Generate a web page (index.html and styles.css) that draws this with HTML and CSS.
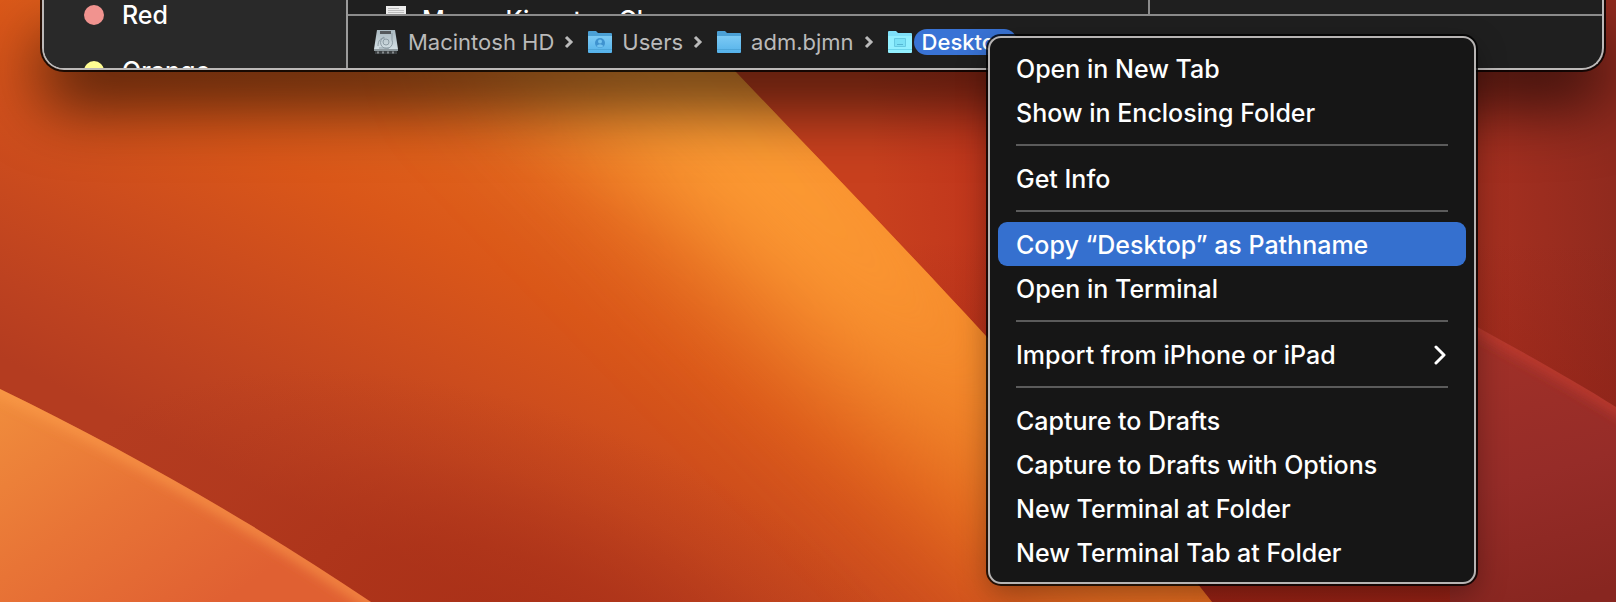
FILE: index.html
```html
<!DOCTYPE html>
<html lang="en">
<head>
<meta charset="utf-8">
<title>Desktop</title>
<link rel="stylesheet" href="styles.css">
</head>
<body>
<svg class="wallpaper" viewBox="0 0 1616 602" preserveAspectRatio="xMinYMin slice" aria-hidden="true">
  <defs>
    <linearGradient id="base" gradientUnits="userSpaceOnUse" x1="-144" y1="285" x2="76" y2="-151">
      <stop offset="0" stop-color="#b43c20"/>
      <stop offset=".15" stop-color="#bd4220"/>
      <stop offset=".4" stop-color="#cd4d1d"/>
      <stop offset=".62" stop-color="#da5719"/>
      <stop offset=".82" stop-color="#e0621c"/>
      <stop offset="1" stop-color="#e87522"/>
    </linearGradient>
    <linearGradient id="glow" gradientUnits="userSpaceOnUse" x1="760" y1="150" x2="1120" y2="590">
      <stop offset="0" stop-color="#fd9c34"/>
      <stop offset=".35" stop-color="#fb9632"/>
      <stop offset=".65" stop-color="#f58c2c" stop-opacity=".8"/>
      <stop offset="1" stop-color="#ee8228" stop-opacity=".5"/>
    </linearGradient>
    <radialGradient id="ember" gradientUnits="userSpaceOnUse" cx="0" cy="0" r="1" gradientTransform="translate(520 640) rotate(20) scale(480 230)">
      <stop offset="0" stop-color="#a82e16" stop-opacity=".85"/>
      <stop offset=".35" stop-color="#a82e16" stop-opacity=".62"/>
      <stop offset=".7" stop-color="#a82e16" stop-opacity=".2"/>
      <stop offset="1" stop-color="#a82e16" stop-opacity="0"/>
    </radialGradient>
    <linearGradient id="crimson" gradientUnits="userSpaceOnUse" x1="880" y1="260" x2="1616" y2="200">
      <stop offset="0" stop-color="#c8401e"/>
      <stop offset=".15" stop-color="#c0361c"/>
      <stop offset=".8" stop-color="#a83020"/>
      <stop offset="1" stop-color="#902a1e"/>
    </linearGradient>
    <linearGradient id="shade" x1="0" y1="0" x2="0" y2="1">
      <stop offset=".4" stop-color="#8c1a10" stop-opacity="0"/>
      <stop offset="1" stop-color="#8c1a10" stop-opacity=".7"/>
    </linearGradient>
    <linearGradient id="petal" gradientUnits="userSpaceOnUse" x1="0" y1="400" x2="170" y2="640">
      <stop offset="0" stop-color="#f08c3c"/>
      <stop offset=".5" stop-color="#e87436"/>
      <stop offset="1" stop-color="#e06032"/>
    </linearGradient>
    <linearGradient id="plum" gradientUnits="userSpaceOnUse" x1="1490" y1="350" x2="1560" y2="602">
      <stop offset="0" stop-color="#a03028"/>
      <stop offset=".5" stop-color="#962c28"/>
      <stop offset="1" stop-color="#882620"/>
    </linearGradient>
    <clipPath id="left"><path d="M0 0H669L734 70C818 158 905 248 985 335C1060 420 1140 510 1212 602H0Z"/></clipPath>
    <clipPath id="corner"><path d="M0 389C130 452 262 528 371 602H0Z"/></clipPath>
    <clipPath id="ridge"><path d="M1450 312C1510 345 1570 378 1616 407V602H1450Z"/></clipPath>
    <filter id="wide" x="-50%" y="-50%" width="200%" height="200%" color-interpolation-filters="sRGB"><feGaussianBlur stdDeviation="64"/></filter>
    <filter id="edge" x="-20%" y="-20%" width="140%" height="140%"><feGaussianBlur stdDeviation="7"/></filter>
  </defs>
  <rect width="1616" height="602" fill="url(#crimson)"/>
  <rect x="900" width="716" height="602" fill="url(#shade)"/>
  <g clip-path="url(#left)">
    <rect width="1240" height="602" fill="url(#base)"/>
    <path d="M560 -60L800 190L1010 410L1240 680" fill="none" stroke="url(#glow)" stroke-width="210" filter="url(#wide)"/>
    <rect width="1240" height="602" fill="url(#ember)"/>
  </g>
  <g clip-path="url(#corner)">
    <rect y="380" width="380" height="222" fill="url(#petal)"/>
    <path d="M-20 380C130 452 262 528 391 616" fill="none" stroke="#ffa04e" stroke-width="8" filter="url(#edge)"/>
  </g>
  <g clip-path="url(#ridge)">
    <rect x="1440" y="300" width="176" height="302" fill="url(#plum)"/>
    <path d="M1450 312C1510 345 1570 378 1640 422" fill="none" stroke="#d04030" stroke-width="8" filter="url(#edge)"/>
  </g>
</svg>

<main class="window">
  <aside class="sidebar">
    <ul class="tags">
      <li class="tag"><span class="dot dot-red"></span>Red</li>
      <li class="tag"><span class="dot dot-orange"></span>Orange</li>
    </ul>
  </aside>
  <section class="content">
    <div class="columns">
      <div class="file">
        <svg class="page" viewBox="0 0 20 26" aria-hidden="true"><path fill="#ececec" d="M0 0h20v26H0z"/><path stroke="#bdbdbd" d="M2 2.500h11M2 4.500h16M2 6.500h16"/></svg>
        <span>Moore Kingston Clean</span>
      </div>
      <div class="preview"></div>
    </div>
    <nav class="pathbar" aria-label="Path">
      <a class="crumb" href="#hd">
        <svg class="icon" viewBox="0 0 24 26" aria-hidden="true">
          <defs><linearGradient id="metal" x1="0" y1="0" x2="0" y2="1"><stop offset="0" stop-color="#aab9c0"/><stop offset="1" stop-color="#d3dfe4"/></linearGradient></defs>
          <path fill="url(#metal)" d="M3 1h18l3 19H0z"/>
          <path fill="#8f9a9f" d="M0 20h24v2H0z"/><path fill="#3c4042" d="M1 22h22v3H1z"/>
          <path stroke="#85898b" stroke-width="2" stroke-dasharray="2 3" d="M3 23.500h18"/>
          <path fill="#55595c" d="M6 2h11v3H6z"/>
          <path fill="none" stroke="#8d9ca4" d="M18 4v7a6 6 0 1 1-8-3M4 17c0-5 2-8 7-8M5 19h10"/>
          <circle cx="12" cy="13" r="3" fill="none" stroke="#8d9ca4"/>
        </svg>
        <span>Macintosh HD</span>
      </a>
      <svg class="sep" viewBox="0 0 8 12" aria-hidden="true"><path d="M1 1l5 5-5 5"/></svg>
      <a class="crumb" href="#users">
        <svg class="icon" viewBox="0 0 24 26" aria-hidden="true">
          <defs><linearGradient id="blue" x1="0" y1="0" x2="0" y2="1"><stop offset="0" stop-color="#7ccaf4"/><stop offset="1" stop-color="#55b2ea"/></linearGradient></defs>
          <path fill="#4ba0d5" d="M0 3q0-1 1-1h7l2 2h13q1 0 1 1v5H0z"/>
          <path fill="url(#blue)" d="M0 7h24v16q0 1-1 1H1q-1 0-1-1z"/>
          <path stroke="#4da6da" d="M0 20.500h24"/>
          <circle cx="12" cy="14" r="5" fill="#3f93d0"/><circle cx="12" cy="12.500" r="2" fill="#72c3f0"/><path fill="#72c3f0" d="M8.500 17q3.500-3.500 7 0-3.500 3-7 0z"/>
        </svg>
        <span>Users</span>
      </a>
      <svg class="sep" viewBox="0 0 8 12" aria-hidden="true"><path d="M1 1l5 5-5 5"/></svg>
      <a class="crumb" href="#home">
        <svg class="icon" viewBox="0 0 24 26" aria-hidden="true">
          <path fill="#4ba0d5" d="M0 3q0-1 1-1h7l2 2h13q1 0 1 1v5H0z"/>
          <path fill="url(#blue)" d="M0 7h24v16q0 1-1 1H1q-1 0-1-1z"/>
          <path stroke="#4da6da" d="M0 20.500h24"/>
        </svg>
        <span>adm.bjmn</span>
      </a>
      <svg class="sep" viewBox="0 0 8 12" aria-hidden="true"><path d="M1 1l5 5-5 5"/></svg>
      <a class="crumb crumb-selected" href="#desktop" aria-current="page">
        <svg class="icon" viewBox="0 0 24 26" aria-hidden="true">
          <path fill="#7fe0f8" d="M0 3q0-1 1-1h7l2 2h13q1 0 1 1v5H0z"/>
          <path fill="#92f0ff" d="M0 7h24v16q0 1-1 1H1q-1 0-1-1z"/>
          <path stroke="#6cd6ec" d="M0 20.500h24"/>
          <path fill="#7be2f6" stroke="#66cae2" d="M6.500 9.500h11v8h-11z"/><path stroke="#55b6d2" d="M9 15.500h6"/>
        </svg>
        <span class="pill">Desktop</span>
      </a>
    </nav>
  </section>
</main>

<div class="menu" role="menu">
  <button class="item" role="menuitem">Open in New Tab</button>
  <button class="item" role="menuitem">Show in Enclosing Folder</button>
  <hr class="rule">
  <button class="item" role="menuitem">Get Info</button>
  <hr class="rule">
  <button class="item item-active" role="menuitem">Copy “Desktop” as Pathname</button>
  <button class="item" role="menuitem">Open in Terminal</button>
  <hr class="rule">
  <button class="item" role="menuitem">Import from iPhone or iPad
    <svg class="more" viewBox="0 0 12 20" aria-hidden="true"><path d="M2 2l8 8-8 8"/></svg>
  </button>
  <hr class="rule">
  <button class="item" role="menuitem">Capture to Drafts</button>
  <button class="item" role="menuitem">Capture to Drafts with Options</button>
  <button class="item" role="menuitem">New Terminal at Folder</button>
  <button class="item" role="menuitem">New Terminal Tab at Folder</button>
</div>
</body>
</html>
```
FILE: styles.css
```css
* {
  box-sizing: border-box;
}

html {
  height: 100%;
}

body {
  position: relative;
  min-height: 100%;
  margin: 0;
  overflow: hidden;
  background: #c2451d;
  color: #fff;
  font: 500 25px/32px Inter, "Liberation Sans", sans-serif;
}

.wallpaper {
  position: absolute;
  inset: 0;
  z-index: -1;
  width: 100%;
  height: 100%;
}

.window {
  display: flex;
  margin: 0 12px 0 42px;
  overflow: hidden;
  border: 2px solid #bcb9b8;
  border-top: 0;
  border-radius: 0 0 22px 22px;
  background: #1f1f1f;
  box-shadow: 0 0 0 2px rgba(0, 0, 0, .8), 0 36px 64px rgba(0, 0, 0, .65);
}

.sidebar {
  flex: none;
  width: 304px;
  max-height: 68px;
  border-right: 2px solid #9b9b9b;
  background: #292929;
}

.tags {
  margin: -13px 0 0;
  padding: 0 0 0 40px;
  list-style: none;
}

.tag {
  display: flex;
  align-items: center;
  gap: 18px;
  height: 56px;
}

.dot {
  width: 20px;
  height: 20px;
  border-radius: 50%;
}

.dot-red {
  background: #f1938f;
}

.dot-orange {
  background: #fffd93;
}

.content {
  flex: 1;
  min-width: 0;
}

.columns {
  display: flex;
  height: 14px;
  overflow: hidden;
}

.file {
  display: flex;
  flex: none;
  gap: 16px;
  width: 802px;
  padding: 4px 0 0 38px;
  border-right: 2px solid #8b8b8b;
  white-space: nowrap;
}

.page {
  flex: none;
  width: 20px;
  height: 26px;
  margin-top: 2px;
}

.preview {
  flex: 1;
}

.pathbar {
  display: flex;
  align-items: center;
  gap: 10px;
  height: 54px;
  padding: 0 26px;
  border-top: 2px solid #8b8b8b;
  font-size: 22px;
  font-weight: 400;
  line-height: 26px;
}

.crumb {
  display: flex;
  align-items: center;
  gap: 10px;
  color: #bababa;
  text-decoration: none;
}

.crumb-selected {
  gap: 2px;
  color: #fff;
  font-weight: 500;
}

.icon {
  flex: none;
  width: 24px;
  height: 26px;
}

.sep {
  width: 8px;
  height: 12px;
  margin: 0 5px 0 1px;
  overflow: visible;
  fill: none;
  stroke: #bababa;
  stroke-width: 3;
}

.pill {
  padding: 0 8px;
  border-radius: 13px;
  background: #3973d5;
}

.menu {
  position: absolute;
  top: 36px;
  left: 988px;
  display: flex;
  flex-direction: column;
  width: 488px;
  padding: 8px;
  border: 2px solid #b7b4b3;
  border-radius: 13px;
  background: #161616;
  box-shadow: 0 0 0 2px rgba(0, 0, 0, .8), 0 10px 30px rgba(0, 0, 0, .35);
}

.item {
  display: flex;
  align-items: center;
  justify-content: space-between;
  height: 44px;
  padding: 2px 18px 0;
  border: 0;
  border-radius: 9px;
  background: none;
  color: inherit;
  font: inherit;
  text-align: left;
  white-space: nowrap;
}

.item-active {
  background: #3570cf;
}

.rule {
  width: 432px;
  height: 2px;
  margin: 10px 18px;
  border: 0;
  background: #5b5b5b;
}

.more {
  width: 12px;
  height: 20px;
  margin-right: 2px;
  fill: none;
  stroke: #fff;
  stroke-width: 3;
  stroke-linecap: round;
  stroke-linejoin: round;
}
```
